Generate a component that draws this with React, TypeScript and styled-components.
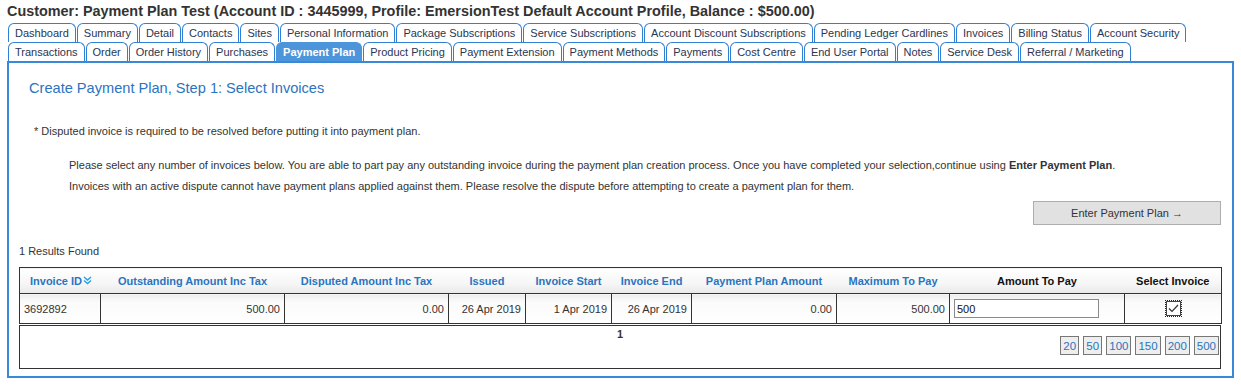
import React from "react";
import styled, { createGlobalStyle, css } from "styled-components";

const GlobalStyle = createGlobalStyle`
  body {
    margin: 0;
    background: #fff;
    font-family: "Liberation Sans", Arial, sans-serif;
    color: #333;
  }
`;

const rowOne = [
  "Dashboard",
  "Summary",
  "Detail",
  "Contacts",
  "Sites",
  "Personal Information",
  "Package Subscriptions",
  "Service Subscriptions",
  "Account Discount Subscriptions",
  "Pending Ledger Cardlines",
  "Invoices",
  "Billing Status",
  "Account Security",
];

const rowTwo = [
  "Transactions",
  "Order",
  "Order History",
  "Purchases",
  "Payment Plan",
  "Product Pricing",
  "Payment Extension",
  "Payment Methods",
  "Payments",
  "Cost Centre",
  "End User Portal",
  "Notes",
  "Service Desk",
  "Referral / Marketing",
];

const columns = [
  { label: "Invoice ID", width: 81, sortable: true, sort: true },
  { label: "Outstanding Amount Inc Tax", width: 184, sortable: true },
  { label: "Disputed Amount Inc Tax", width: 164, sortable: true },
  { label: "Issued", width: 77, sortable: true },
  { label: "Invoice Start", width: 86, sortable: true },
  { label: "Invoice End", width: 80, sortable: true },
  { label: "Payment Plan Amount", width: 145, sortable: true },
  { label: "Maximum To Pay", width: 113, sortable: true },
  { label: "Amount To Pay", width: 175, sortable: false },
  { label: "Select Invoice", width: 97, sortable: false },
];

const pageSizes = ["20", "50", "100", "150", "200", "500"];

const Page = styled.div`
  padding: 0 7px 0 7px;
  width: 1227px;
`;

const Title = styled.h1`
  margin: 0;
  padding-top: 2px;
  font-size: 14.4px;
  line-height: 18px;
  font-weight: bold;
  color: #333;
`;

const Tabs = styled.div`
  margin-top: 3px;
  padding-left: 1px;
`;

const TabRow = styled.div`
  display: flex;
  gap: 1px;
  height: 19px;
`;

const Tab = styled.div<{ $active?: boolean }>`
  box-sizing: border-box;
  height: 19px;
  padding: 0 6px;
  border: 1px solid #2f7fd2;
  border-bottom: none;
  border-radius: 6px 6px 0 0;
  font-size: 11px;
  line-height: 18px;
  color: #2a3552;
  background: #fff;
  white-space: nowrap;
  ${(p) =>
    p.$active &&
    css`
      background: #4d95db;
      border-color: #4d95db;
      color: #fff;
      font-weight: bold;
    `}
`;

const Panel = styled.div`
  border: 2px solid #3a88d8;
  padding: 15px 10px 7px 10px;
`;

const Heading = styled.h2`
  margin: 0 0 0 10px;
  font-size: 14.6px;
  line-height: 20px;
  font-weight: normal;
  color: #2a74c0;
`;

const Note = styled.p`
  margin: 25px 0 0 15px;
  font-size: 11px;
  line-height: 16px;
`;

const Instructions = styled.div`
  margin: 16px 0 0 50px;
  font-size: 11px;
  line-height: 21px;
`;

const ButtonBar = styled.div`
  display: flex;
  justify-content: flex-end;
  margin-top: 4px;
  padding-right: 1px;
`;

const ActionButton = styled.button`
  box-sizing: border-box;
  width: 188px;
  height: 24px;
  background: #e1e1e1;
  border: 1px solid #adadad;
  font-family: inherit;
  font-size: 11px;
  color: #333;
  cursor: pointer;
`;

const Results = styled.div`
  margin-top: 18px;
  font-size: 11px;
  line-height: 16px;
`;

const Grid = styled.table`
  margin-top: 8px;
  width: 1202px;
  border-collapse: collapse;
  table-layout: fixed;
  border: 1px solid #333;
  font-size: 11px;
`;

const HeadCell = styled.th<{ $plain?: boolean; $left?: boolean }>`
  height: 25px;
  padding: 0;
  text-align: ${(p) => (p.$left ? "left" : "center")};
  padding-left: ${(p) => (p.$left ? "10px" : "0")};
  font-weight: bold;
  color: ${(p) => (p.$plain ? "#111" : "#2a74c0")};
  background: linear-gradient(#ffffff 0%, #f6f6f6 60%, #e9e9e9 100%);
  border-bottom: 1px solid #333;
  white-space: nowrap;
`;

const Cell = styled.td<{ $align?: string }>`
  height: 29px;
  padding: 0 4px;
  text-align: ${(p) => p.$align || "right"};
  border: 1px solid #333;
  background: linear-gradient(#ececec 0%, #fafafa 25%, #ffffff 100%);
  color: #333;
  white-space: nowrap;
`;

const AmountInput = styled.input`
  box-sizing: border-box;
  width: 145px;
  height: 19px;
  margin: 0;
  padding: 1px 2px;
  border: 1px solid #8a8a8a;
  font-family: inherit;
  font-size: 11px;
  color: #111;
`;

const Check = styled.span`
  display: inline-flex;
  align-items: center;
  justify-content: center;
  box-sizing: border-box;
  width: 15px;
  height: 15px;
  outline: 1px dotted #222;
  border: 1px solid #444;
  background: #fff;
  vertical-align: middle;
`;

const Pager = styled.div`
  box-sizing: border-box;
  margin-top: 1px;
  width: 1202px;
  height: 44px;
  border: 1px solid #333;
  font-size: 11px;
`;

const PageNumber = styled.div`
  text-align: center;
  font-weight: bold;
  line-height: 12px;
  margin-top: 2px;
`;

const SizeList = styled.div`
  display: flex;
  justify-content: flex-end;
  gap: 4px;
  margin-top: -4px;
  padding-right: 1px;
`;

const SizeButton = styled.button`
  box-sizing: border-box;
  height: 19px;
  min-width: 19px;
  padding: 0 2px;
  background: #eee;
  border: 1px solid #777;
  font-family: inherit;
  font-size: 11.5px;
  color: #2a74c0;
  cursor: pointer;
`;

const SortIcon = () => (
  <svg width="9" height="9" viewBox="0 0 9 9" style={{ marginLeft: 1, verticalAlign: "-0.5px" }}>
    <path d="M1 1 L4.5 4 L8 1 M1 4.5 L4.5 7.5 L8 4.5" fill="none" stroke="#1fa3e6" strokeWidth="1.4" />
  </svg>
);

const Tick = () => (
  <svg width="11" height="9" viewBox="0 0 11 9">
    <path d="M1 4.5 L4 7.5 L10 1" fill="none" stroke="#333" strokeWidth="1.2" />
  </svg>
);

export default function App() {
  return (
    <Page>
      <GlobalStyle />
      <Title>
        Customer: Payment Plan Test (Account ID : 3445999, Profile: EmersionTest Default Account Profile, Balance : $500.00)
      </Title>
      <Tabs>
        <TabRow>
          {rowOne.map((t) => (
            <Tab key={t}>{t}</Tab>
          ))}
        </TabRow>
        <TabRow>
          {rowTwo.map((t) => (
            <Tab key={t} $active={t === "Payment Plan"}>
              {t}
            </Tab>
          ))}
        </TabRow>
      </Tabs>
      <Panel>
        <Heading>Create Payment Plan, Step 1: Select Invoices</Heading>
        <Note>* Disputed invoice is required to be resolved before putting it into payment plan.</Note>
        <Instructions>
          <div>
            Please select any number of invoices below. You are able to part pay any outstanding invoice during the
            payment plan creation process. Once you have completed your selection,continue using{" "}
            <b>Enter Payment Plan</b>.
          </div>
          <div>
            Invoices with an active dispute cannot have payment plans applied against them. Please resolve the dispute
            before attempting to create a payment plan for them.
          </div>
        </Instructions>
        <ButtonBar>
          <ActionButton>Enter Payment Plan →</ActionButton>
        </ButtonBar>
        <Results>1 Results Found</Results>
        <Grid>
          <colgroup>
            {columns.map((c) => (
              <col key={c.label} style={{ width: c.width }} />
            ))}
          </colgroup>
          <thead>
            <tr>
              {columns.map((c, i) => (
                <HeadCell key={c.label} $plain={!c.sortable} $left={i === 0}>
                  {c.label}
                  {c.sort && <SortIcon />}
                </HeadCell>
              ))}
            </tr>
          </thead>
          <tbody>
            <tr>
              <Cell $align="left">3692892</Cell>
              <Cell>500.00</Cell>
              <Cell>0.00</Cell>
              <Cell>26 Apr 2019</Cell>
              <Cell>1 Apr 2019</Cell>
              <Cell>26 Apr 2019</Cell>
              <Cell>0.00</Cell>
              <Cell>500.00</Cell>
              <Cell $align="left">
                <AmountInput defaultValue="500" />
              </Cell>
              <Cell $align="center">
                <Check>
                  <Tick />
                </Check>
              </Cell>
            </tr>
          </tbody>
        </Grid>
        <Pager>
          <PageNumber>1</PageNumber>
          <SizeList>
            {pageSizes.map((s) => (
              <SizeButton key={s}>{s}</SizeButton>
            ))}
          </SizeList>
        </Pager>
      </Panel>
    </Page>
  );
}
